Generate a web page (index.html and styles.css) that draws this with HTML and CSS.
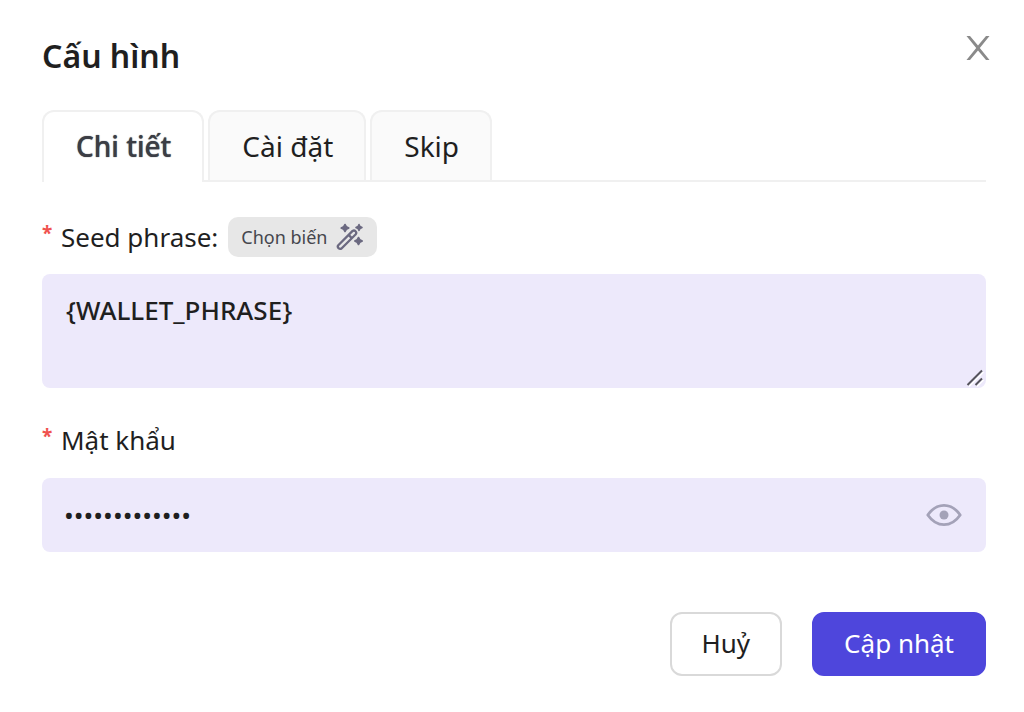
FILE: index.html
```html
<!DOCTYPE html>
<html lang="vi">
<head>
<meta charset="utf-8">
<meta name="viewport" content="width=device-width, initial-scale=1">
<title>Cấu hình</title>
<link rel="stylesheet" href="styles.css">
</head>
<body>
<main class="dialog" role="dialog" aria-labelledby="dialog-title">
  <header class="dialog-header">
    <h1 class="dialog-title" id="dialog-title">Cấu hình</h1>
    <button class="close" type="button" aria-label="Đóng">
      <svg width="24" height="24" viewBox="0 0 24 24" fill="#8a8a8a" aria-hidden="true"><path d="M0.500 0H4L12 9.500L20 0H23.500L13.800 12L23.500 24H20L12 14.500L4 24H0.500L10.200 12Z"/></svg>
    </button>
  </header>

  <div class="tabs" role="tablist">
    <button class="tab tab-active" type="button" role="tab" aria-selected="true">Chi tiết</button>
    <button class="tab" type="button" role="tab" aria-selected="false">Cài đặt</button>
    <button class="tab" type="button" role="tab" aria-selected="false">Skip</button>
  </div>

  <form class="form">
    <div class="label-row">
      <span class="required" aria-hidden="true">*</span>
      <label class="label" for="seed">Seed phrase:</label>
      <button class="variable" type="button">
        Chọn biến
        <svg width="28" height="28" viewBox="0 0 28 28" aria-hidden="true">
          <g fill="none" stroke="#6b6980" stroke-width="2.300" stroke-linejoin="round">
            <path d="M2.300 22.200L16.600 7.900Q18.200 6.900 19.500 8.200Q20.900 9.600 19.800 11.200L5.500 25.500Q4 26.500 2.500 25.100Q1.100 23.700 2.300 22.200Z"/>
            <path d="M12.600 11.900L15.800 15.100"/>
          </g>
          <g fill="#6b6980" stroke="#6b6980" stroke-width="1.600" stroke-linejoin="round">
            <path d="M9 1.500L10.300 3.700L12.800 5L10.300 6.300L9 8.500L7.700 6.300L5.200 5L7.700 3.700Z"/>
            <path d="M23 1.500L24 3.500L26 4.500L24 5.500L23 7.500L22 5.500L20 4.500L22 3.500Z"/>
            <path d="M22.500 14.500L23.800 16.700L26.200 18L23.800 19.300L22.500 21.500L21.200 19.300L18.800 18L21.200 16.700Z"/>
          </g>
        </svg>
      </button>
    </div>
    <div class="field">
      <textarea class="control seed" id="seed" required spellcheck="false">{WALLET_PHRASE}</textarea>
      <svg class="grip" width="18" height="18" viewBox="0 0 18 18" fill="none" aria-hidden="true">
        <path d="M3 17.500L17.500 3M11 17.500L17.500 11" stroke="#fff" stroke-width="1.500"/>
        <path d="M1.500 16L16 1.500M9.500 16L16 9.500" stroke="#55545c" stroke-width="2"/>
      </svg>
    </div>

    <div class="label-row label-password">
      <span class="required" aria-hidden="true">*</span>
      <label class="label" for="password">Mật khẩu</label>
    </div>
    <div class="control password-box">
      <input class="password" id="password" type="password" value="matkhau123456" required>
      <button class="reveal" type="button" aria-label="Hiện mật khẩu">
        <svg width="36" height="24" viewBox="0 0 36 24" aria-hidden="true">
          <path d="M1.800 12Q8.500 2.300 18 2.300Q27.500 2.300 34.200 12Q27.500 21.700 18 21.700Q8.500 21.700 1.800 12Z" fill="none" stroke="#a4a2b8" stroke-width="2.800" stroke-linejoin="round"/>
          <circle cx="18" cy="12" r="4.500" fill="#a4a2b8"/>
        </svg>
      </button>
    </div>

    <footer class="actions">
      <button class="button" type="button">Huỷ</button>
      <button class="button button-primary" type="submit">Cập nhật</button>
    </footer>
  </form>
</main>
</body>
</html>
```

FILE: styles.css
```css
* {
  box-sizing: border-box;
}

body {
  margin: 0;
  background: #fff;
  color: #1f1f1f;
  font-family: "Noto Sans", "Open Sans", sans-serif;
  font-size: 26px;
  line-height: 40px;
}

button,
input,
textarea {
  margin: 0;
  font: inherit;
  color: inherit;
}

button {
  cursor: pointer;
}

svg {
  display: block;
}

.dialog {
  padding: 36px 38px 36px 42px;
}

.dialog-header {
  display: flex;
  justify-content: space-between;
  align-items: flex-start;
}

.dialog-title {
  margin: 0;
  font-size: 32px;
  font-weight: 600;
}

.close,
.reveal {
  padding: 0;
  border: 0;
  background: none;
}

.close {
  margin-right: -4px;
}

.tabs {
  display: flex;
  gap: 4px;
  margin-top: 34px;
  box-shadow: inset 0 -2px #f0f0f0;
}

.tab {
  padding: 14px 31px 16px 32px;
  border: 2px solid #f0f0f0;
  border-bottom-width: 0;
  border-radius: 12px 12px 0 0;
  background: #fafafa;
  font-size: 28px;
  box-shadow: inset 0 -2px #f0f0f0;
}

.tab-active {
  background: #fff;
  color: #3b3d45;
  font-weight: 500;
  text-shadow: 0 0 1px currentColor;
  box-shadow: none;
}

.label-row {
  display: flex;
  align-items: center;
  margin-top: 35px;
}

.label-password {
  margin-top: 32px;
}

.required {
  width: 19px;
  padding-bottom: 8px;
  color: #f0524f;
  font-size: 19px;
  font-weight: 700;
  line-height: 32px;
}

.variable {
  display: flex;
  align-items: center;
  gap: 8px;
  height: 40px;
  margin-left: 10px;
  padding: 0 13px;
  border: 0;
  border-radius: 10px;
  background: #e7e7e7;
  color: #45464d;
  font-size: 18px;
}

.field {
  position: relative;
  margin-top: 17px;
}

.control {
  width: 100%;
  border: 0;
  border-radius: 8px;
  background: #ede9fb;
}

.seed {
  display: block;
  height: 114px;
  padding: 16px 24px;
  font-weight: 500;
  resize: none;
}

.grip {
  position: absolute;
  right: 2px;
  bottom: 1px;
}

.password-box {
  display: flex;
  align-items: center;
  gap: 24px;
  margin-top: 18px;
  padding: 17px 24px 17px 22px;
}

.password {
  flex: 1;
  min-width: 0;
  padding: 0;
  border: 0;
  background: none;
}

.actions {
  display: flex;
  justify-content: flex-end;
  gap: 30px;
  margin-top: 60px;
}

.button {
  padding: 9px 30px 11px;
  border: 2px solid #d9d9d9;
  border-radius: 12px;
  background: #fff;
}

.button-primary {
  border-color: #4e46dc;
  background: #4e46dc;
  color: #fff;
}
```
